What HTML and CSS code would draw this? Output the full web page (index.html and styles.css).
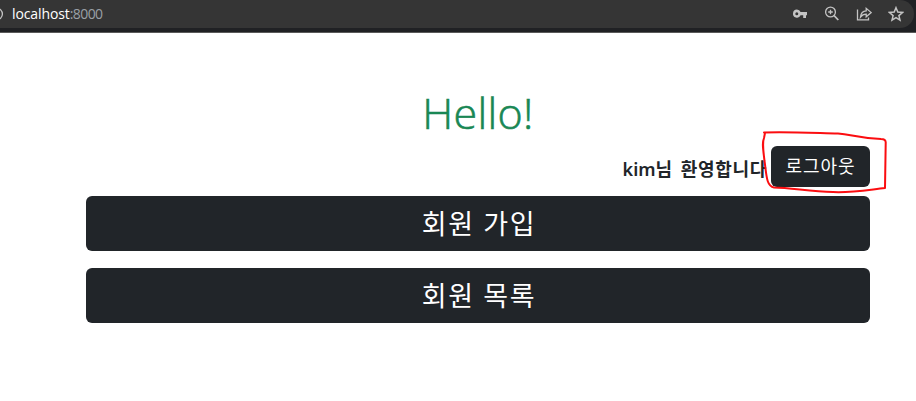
FILE: index.html
```html
<!DOCTYPE html>
<html lang="ko">
<head>
<meta charset="utf-8">
<title>Hello</title>
<link rel="stylesheet" href="styles.css">
</head>
<body>
<header class="toolbar">
  <div class="address">
    <svg class="info" width="4" height="14" viewBox="0 0 4 14"><circle cx="-3.4" cy="7" r="5.8"/></svg>
    <span class="host">localhost</span><span class="port">:8000</span>
    <div class="actions">
      <svg width="16" height="16" viewBox="0 0 16 16"><path class="solid" fill-rule="evenodd" d="M4.800 3.600a4 4 0 0 1 3.800 2.500H15v3.200h-1V12h-2.800V9.300H8.600A4 4 0 1 1 4.800 3.600zm0 2.600a1.500 1.500 0 1 0 0 3 1.500 1.500 0 0 0 0-3z"/></svg>
      <svg width="16" height="16" viewBox="0 0 16 16"><circle cx="6.500" cy="6" r="4.900"/><path d="M4.200 6h4.600M6.500 3.700v4.600"/><path class="thick" d="M10 9.500l4.300 4.500"/></svg>
      <svg width="16" height="16" viewBox="0 0 16 16"><path d="M1.500 3.500v10.300h11V11.500"/><path d="M4.500 11c.4-3.800 2.100-5.900 5.700-6.100V2.300l5 4.300-5 4.200V8.200c-2.600 0-4.200.8-5.700 2.800z"/></svg>
      <svg width="16" height="16" viewBox="0 0 16 16"><path class="star" d="M8 1.700l1.800 4.400 4.700.4-3.600 3.100 1.100 4.600L8 11.700l-4 2.500 1.100-4.600-3.600-3.100 4.700-.4z"/></svg>
    </div>
  </div>
</header>
<main class="container">
  <h1 class="title">Hello!</h1>
  <div class="user">
    <strong class="welcome"><span class="name">kim</span>님 환영합니다</strong>
    <a class="btn logout">로그아웃</a>
    <svg class="mark" width="130" height="70" viewBox="0 0 130 70"><path d="M4 6.500C25 5.500 56 7 78 7.500c14 1 18 4.500 43 5.500 3 0 5 1 4.700 4L125 62c-18 2-35 5-52 4-24-1-42-4-59-4.500C6 60 6.500 48 4.500 35 3 22 2 17 4 12l1-5"/></svg>
  </div>
  <a class="btn wide">회원 가입</a>
  <a class="btn wide">회원 목록</a>
</main>
</body>
</html>
```
FILE: styles.css
```css
* { box-sizing: border-box; }
body {
  margin: 0;
  background: #fff;
  color: #212529;
  font-family: "Noto Sans", "Noto Sans CJK KR", sans-serif;
}
.toolbar {
  height: 33px;
  padding-right: 2px;
  background: #202124;
  border-bottom: 1px solid #5a5a5a;
}
.address {
  display: flex;
  align-items: center;
  height: 28px;
  padding-right: 10px;
  background: #353535;
  border-radius: 0 14px 14px 0;
  font: 14px/28px "Open Sans", sans-serif;
}
.address svg { fill: none; stroke: #c4c4c4; stroke-width: 1.3; }
.address .solid { fill: #c4c4c4; stroke: none; }
.address .thick { stroke-width: 1.8; }
.address .star { stroke-width: 1.5; }
.info { margin-right: 8px; }
.host { color: #fff; letter-spacing: -0.1px; }
.port { color: #9aa0a6; letter-spacing: -0.6px; }
.actions { display: flex; gap: 16px; margin-left: auto; }
.container { width: 784px; margin: 0 0 0 86px; padding-top: 53px; }
.title {
  height: 60px;
  margin: 0;
  color: #198754;
  font: 300 43px/54px "Open Sans", sans-serif;
  letter-spacing: 0.3px;
  -webkit-text-stroke: 0.6px #198754;
  text-align: center;
}
.user {
  position: relative;
  display: flex;
  justify-content: flex-end;
  align-items: flex-start;
  height: 50px;
}
.welcome {
  margin-right: 4px;
  font-size: 18px;
  line-height: 47px;
  font-weight: 600;
  letter-spacing: 0.7px;
  word-spacing: 2.5px;
  white-space: nowrap;
}
.name { letter-spacing: 0; }
.btn {
  display: block;
  border-radius: 6px;
  background: #212529;
  color: #fff;
  text-align: center;
  white-space: nowrap;
}
.logout { width: 99px; height: 41px; font-size: 18px; line-height: 40px; letter-spacing: 0.9px; }
.mark {
  position: absolute;
  top: -20px;
  right: -20px;
  fill: none;
  stroke: #fb0d10;
  stroke-width: 2;
  stroke-linejoin: round;
  stroke-linecap: round;
}
.wide { height: 55px; margin-bottom: 17px; padding-left: 2px; font-size: 27px; line-height: 56px; letter-spacing: 1.6px; }
```
